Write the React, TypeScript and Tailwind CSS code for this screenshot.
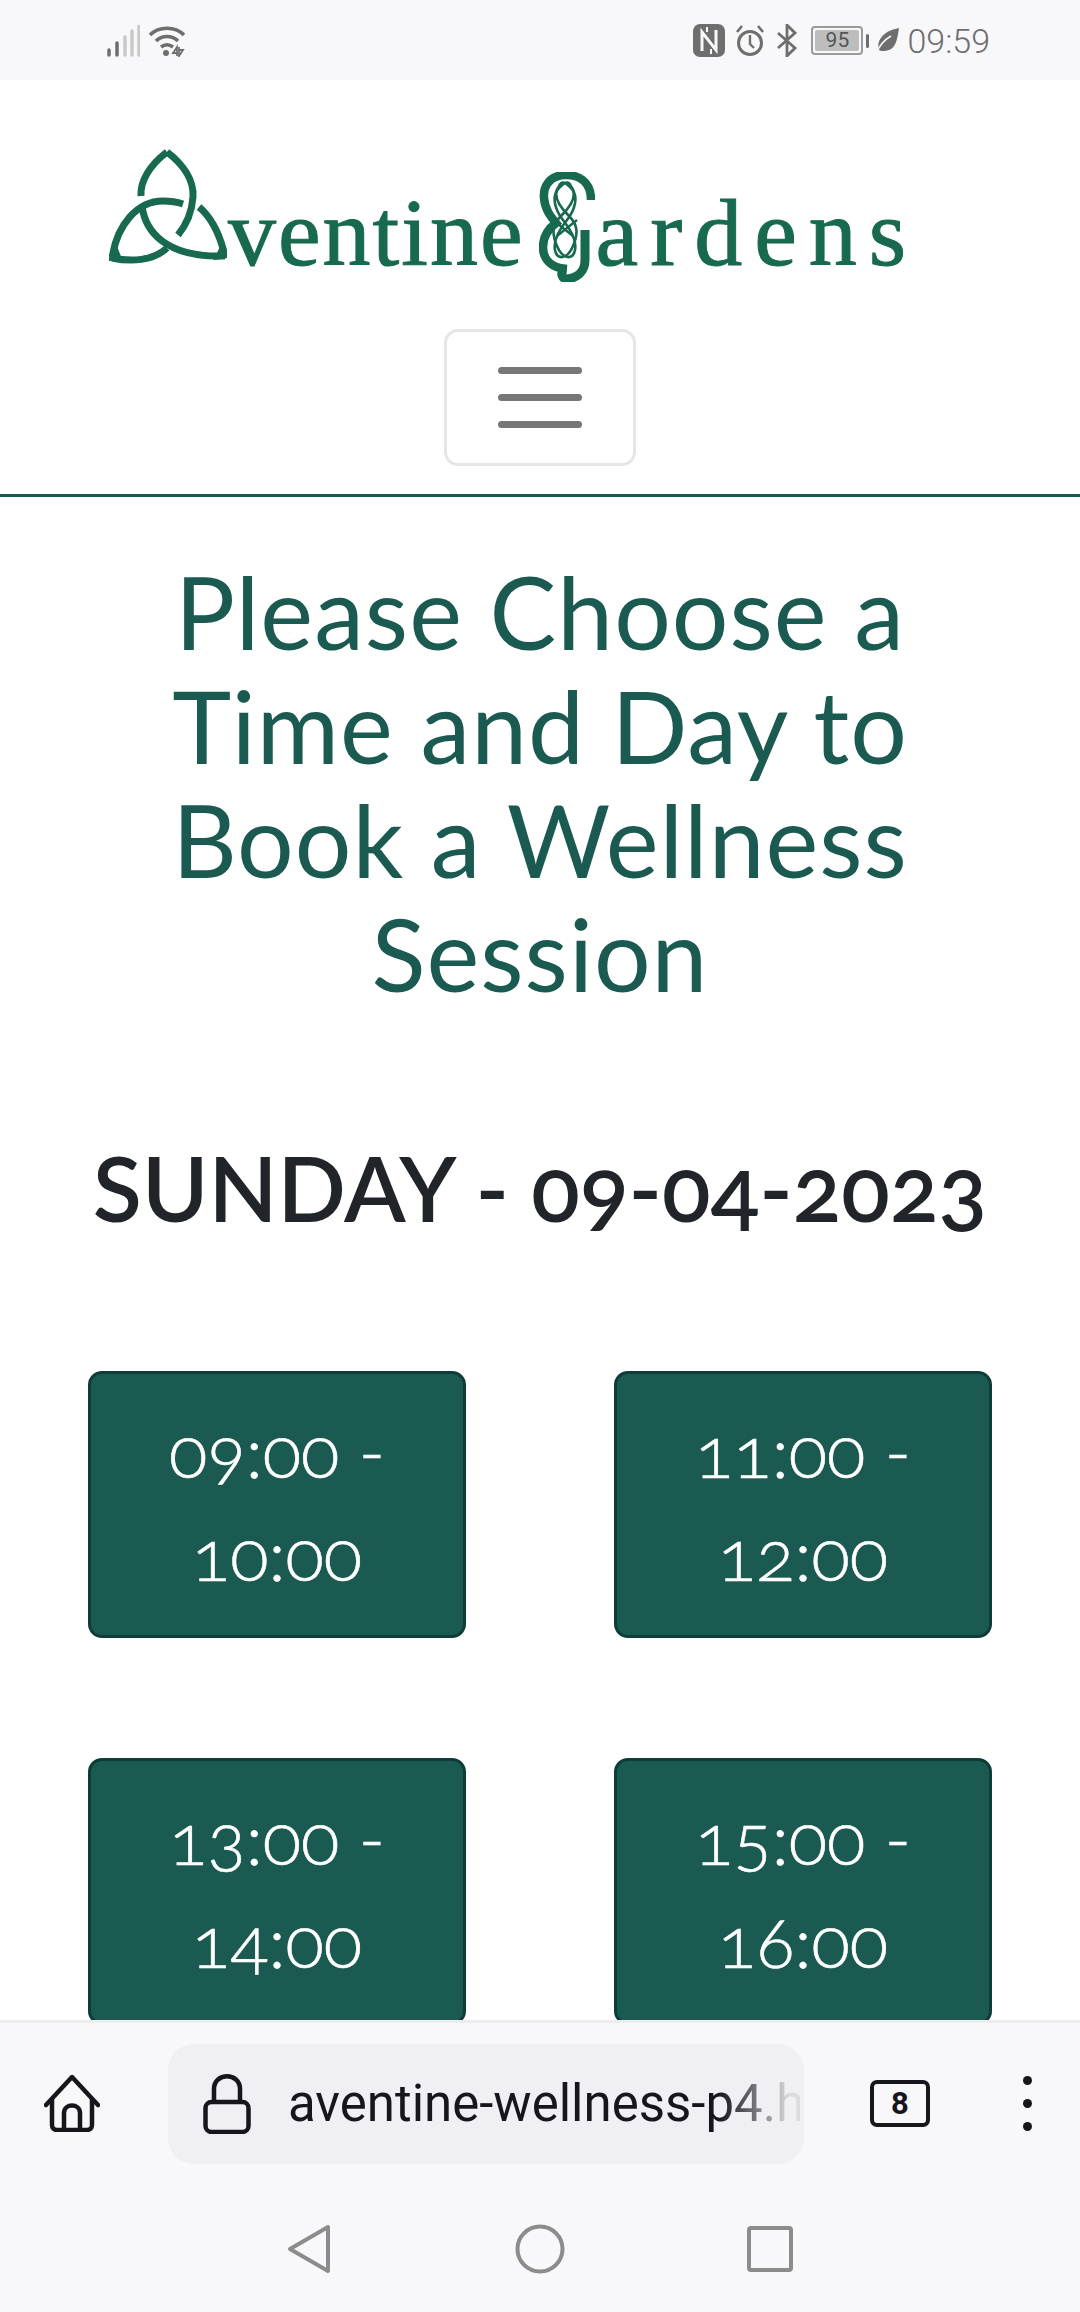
import React from 'react'

const slots = [
  ['09:00 -', '10:00'],
  ['11:00 -', '12:00'],
  ['13:00 -', '14:00'],
  ['15:00 -', '16:00'],
]

function SignalIcon() {
  return (
    <svg width="34" height="32" viewBox="0 0 34 32" fill="none" strokeLinecap="round" strokeWidth="3.5">
      <path d="M3 30v-5" stroke="#6e6e6e" />
      <path d="M11 30V18" stroke="#6e6e6e" />
      <path d="M19 30V12" stroke="#c8c8c8" />
      <path d="M26 30V6" stroke="#c8c8c8" />
      <path d="M33 30V1" stroke="#c8c8c8" />
    </svg>
  )
}

function WifiIcon() {
  return (
    <svg width="38" height="32" viewBox="0 0 38 32" fill="none" stroke="#6e6e6e" strokeWidth="3.6">
      <path d="M2 10C11 1 27 1 36 10" />
      <path d="M8 16c6-6 16-6 22 0" />
      <path d="M13 22c4-3 8-3 12 0" />
      <circle cx="18" cy="28" r="3" fill="#6e6e6e" stroke="none" />
      <path d="M29 31V22l-4 6h4M31 22v9l4-6h-4" strokeWidth="1.8" />
    </svg>
  )
}

function NfcIcon() {
  return (
    <svg width="32" height="33" viewBox="0 0 32 33">
      <rect x="0" y="0" width="32" height="33" rx="7" fill="#6e6e6e" />
      <path d="M9 27V8l14 18V6" fill="none" stroke="#f8f8fa" strokeWidth="3" />
      <path d="M14 3v5M18 30v-5" stroke="#f8f8fa" strokeWidth="2" />
    </svg>
  )
}

function AlarmIcon() {
  return (
    <svg width="30" height="33" viewBox="0 0 30 33" fill="none" stroke="#6e6e6e" strokeWidth="3">
      <circle cx="15" cy="19" r="11.5" />
      <path d="M15 11v9l4 4" strokeWidth="2.4" />
      <path d="M2 8l5-6M28 8l-5-6" strokeWidth="2.6" />
    </svg>
  )
}

function BluetoothIcon() {
  return (
    <svg width="22" height="33" viewBox="0 0 22 33" fill="none" stroke="#6e6e6e" strokeWidth="2.8">
      <path d="M2 9l17 15-8 8V1l8 8L2 24" />
    </svg>
  )
}

function LeafIcon() {
  return (
    <svg width="24" height="26" viewBox="0 0 24 26">
      <path d="M24 0C22 14 20 23 8 23c-2 0-3-.5-4-1C1 14 7 3 24 0Z" fill="#6e6e6e" />
      <path d="M1 26C4 18 9 12 16 8" fill="none" stroke="#f8f8fa" strokeWidth="1.6" />
    </svg>
  )
}

// trefoil knot standing in for the A of the logo, broken where strands pass under
function Triquetra() {
  return (
    <svg width="118" height="116" viewBox="0 0 118 116" fill="none" stroke="#17694f" strokeWidth="7">
      <path d="M58 3C41 16 31 32 32 47" />
      <path d="M33 57c3 24 22 52 83 50" />
      <path d="M58 3c17 13 27 29 26 45-1 14-6 27-15 38" />
      <path d="M58 99C44 112 22 113 3 109" />
      <path d="M3 109C8 76 28 52 54 52c8 0 14 1 20 3" />
      <path d="M90 58c12 10 21 28 26 49" />
      <path d="M0 111l12-1-4-10Z" fill="#17694f" strokeWidth="2" />
      <path d="M118 108l-12 2 6-12Z" fill="#17694f" strokeWidth="2" />
    </svg>
  )
}

function KnotG() {
  return (
    <svg width="56" height="110" viewBox="0 0 56 110" fill="none" stroke="#17694f">
      <path d="M52 28C52 8 38 3 27 3 11 3 4 14 5 26c1 12 7 19 12 25-8 6-13 14-13 24 0 13 9 21 24 22" strokeWidth="8.5" />
      <path d="M46 58v30c0 12-8 18-18 19-5 0-7-6-3-9" strokeWidth="9" />
      <path d="M20 14c-8 10 2 22 10 30s10 16 4 30-16 14-18 4 4-20 12-30 12-24 4-32-10-6-12-2Z" strokeWidth="2.6" />
      <path d="M32 14c8 10-2 22-10 30s-10 16-4 30 16 14 18 4-4-20-12-30-12-24-4-32 10-6 12-2Z" strokeWidth="2.6" />
      <path d="M14 48l20 16M38 48L18 64" strokeWidth="2.4" />
    </svg>
  )
}

function Logo() {
  return (
    <div className="flex items-end h-[185px] pl-[109px] font-['Liberation_Serif',serif] text-[#17694f] text-[96px] leading-[96px] [-webkit-text-stroke:1px_#17694f]">
      <Triquetra />
      <span className="tracking-[2px] mb-[-16px] ml-[1px]">ventine</span>
      <span className="ml-[14px] mb-[-17px]">
        <KnotG />
      </span>
      <span className="tracking-[12px] mb-[-16px] ml-[1px]">ardens</span>
    </div>
  )
}

function HomeIcon() {
  return (
    <svg width="56" height="57" viewBox="0 0 56 57" fill="none" stroke="#16161c" strokeWidth="4.5" strokeLinejoin="round">
      <path d="M2 30L28 2l26 28" strokeLinecap="round" />
      <path d="M8 24v26c0 3 2 5 5 5h30c3 0 5-2 5-5V24" />
      <path d="M20 55V38c0-10 16-10 16 0v17" />
    </svg>
  )
}

function LockIcon() {
  return (
    <svg width="48" height="60" viewBox="0 0 48 60" fill="none" stroke="#16161c" strokeWidth="4.5">
      <rect x="2.5" y="28" width="43" height="30" rx="6" />
      <path d="M11 28V15c0-17 26-17 26 0v13" />
    </svg>
  )
}

export default function App() {
  return (
    <div className="flex flex-col h-[2312px] w-[1080px] overflow-hidden bg-white font-['Lato',sans-serif]">
      {/* Status bar */}
      <div className="flex shrink-0 items-center justify-between h-[80px] bg-[#f8f8fa] pl-[106px] pr-[90px]">
        <div className="flex items-center gap-[8px] mt-[2px]">
          <SignalIcon />
          <WifiIcon />
        </div>
        <div className="flex items-center mt-[1px]">
          <NfcIcon />
          <span className="ml-[10px]"><AlarmIcon /></span>
          <span className="ml-[11px]"><BluetoothIcon /></span>
          <div className="ml-[13px] flex items-center justify-center w-[52px] h-[29px] rounded-[4px] border-2 border-[#9a9a9a] p-[2px]">
            <div className="w-full h-full bg-[#bdbdbd] rounded-[2px] flex items-center justify-center font-['Roboto',sans-serif] text-[21px] leading-none text-[#555]">
              95
            </div>
          </div>
          <div className="ml-[3px] w-[3px] h-[14px] bg-[#6e6e6e] rounded-full" />
          <span className="ml-[6px]"><LeafIcon /></span>
          <span className="ml-[8px] font-['Roboto',sans-serif] font-light text-[34px] leading-none text-[#6e6e6e]">09:59</span>
        </div>
      </div>

      {/* Page content, cut off by the browser toolbar */}
      <div className="flex-1 min-h-0 overflow-hidden">
        <header className="flex flex-col items-center border-b-[3px] border-[#1a5a50] pb-[28px]">
          <div className="self-stretch mb-[64px]">
            <Logo />
          </div>
          <button className="flex flex-col items-center justify-center gap-[20px] w-[192px] h-[137px] rounded-[14px] border-[3px] border-[#e6e6e6] bg-white">
            <span className="w-[84px] h-[7px] rounded-full bg-[#777777]" />
            <span className="w-[84px] h-[7px] rounded-full bg-[#777777]" />
            <span className="w-[84px] h-[7px] rounded-full bg-[#777777]" />
          </button>
        </header>

        <main className="flex flex-col items-center">
          <h1 className="mt-[57px] w-[800px] text-center text-[100px] leading-[114px] tracking-[1px] font-normal text-[#1a5a50]">
            Please Choose a Time and Day to Book a Wellness Session
          </h1>
          <h2 className="mt-[127px] text-center text-[90px] leading-[100px] font-semibold text-[#212529] oldstyle-nums whitespace-nowrap">
            SUNDAY - 09-04-2023
          </h2>
          <div className="mt-[134px] grid grid-cols-[378px_378px] gap-x-[148px] gap-y-[120px]">
            {slots.map((slot) => (
              <button
                key={slot[0]}
                className="h-[267px] pb-[6px] rounded-[14px] border-[3px] border-[#0d3d36] bg-[#1a5a50] text-white text-[71px] leading-[103px] font-light oldstyle-nums [-webkit-text-stroke:0.6px_white]"
              >
                {slot[0]}
                <br />
                {slot[1]}
              </button>
            ))}
          </div>
        </main>
      </div>

      {/* Browser toolbar */}
      <div className="shrink-0 h-[292px] bg-[#f8f8fa] border-t-[3px] border-[#ededee]">
        <div className="flex items-center h-[200px] pb-[39px]">
          <div className="ml-[44px]"><HomeIcon /></div>
          <div className="ml-[68px] flex items-center w-[636px] h-[120px] rounded-[26px] bg-[#f0eff4] pl-[35px]">
            <LockIcon />
            <div className="ml-[37px] w-[512px] whitespace-nowrap font-['Roboto',sans-serif] text-[51px] leading-[60px] bg-gradient-to-r from-[#16161c] from-[84%] to-[#dcdce0] to-[98%] bg-clip-text text-transparent">
              aventine-wellness-p4.h
            </div>
          </div>
          <div className="ml-[66px] flex items-center justify-center w-[60px] h-[47px] rounded-[7px] border-[4.5px] border-[#16161c] font-['Roboto',sans-serif] font-bold text-[31px] leading-none text-[#16161c]">
            8
          </div>
          <div className="ml-[93px] flex flex-col gap-[14px]">
            <span className="w-[9px] h-[9px] rounded-full bg-[#16161c]" />
            <span className="w-[9px] h-[9px] rounded-full bg-[#16161c]" />
            <span className="w-[9px] h-[9px] rounded-full bg-[#16161c]" />
          </div>
        </div>
        <div className="flex items-center h-[50px] pl-[287px] mt-[1px]">
          <svg width="44" height="50" viewBox="0 0 44 50" fill="none" stroke="#8c8c8c" strokeWidth="4" strokeLinejoin="round">
            <path d="M41 3v44L3 25Z" />
          </svg>
          <svg className="ml-[184px]" width="50" height="50" viewBox="0 0 50 50" fill="none" stroke="#8c8c8c" strokeWidth="4">
            <circle cx="25" cy="25" r="22.5" />
          </svg>
          <svg className="ml-[182px]" width="46" height="46" viewBox="0 0 46 46" fill="none" stroke="#8c8c8c" strokeWidth="4">
            <rect x="2" y="2" width="42" height="42" rx="2" />
          </svg>
        </div>
      </div>
    </div>
  )
}
